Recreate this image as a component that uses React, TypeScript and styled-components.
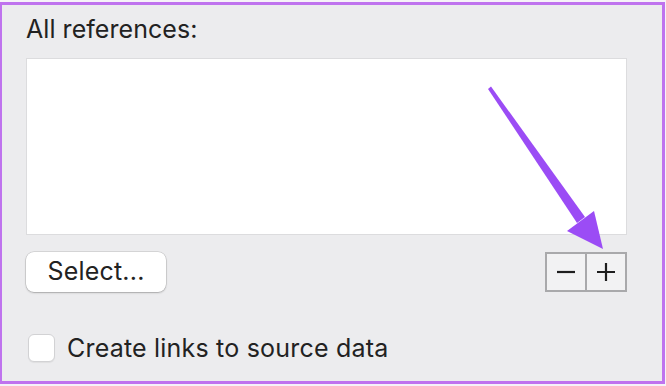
import React from 'react';
import styled, { createGlobalStyle } from 'styled-components';

const GlobalStyle = createGlobalStyle`
    html, body {
        margin: 0;
        padding: 0;
        background: #f6f3f8;
    }
    body {
        font-family: Inter, "Liberation Sans", Arial, sans-serif;
        color: #222222;
    }
`;

const Page = styled.div`
    width: 666px;
    height: 386px;
    box-sizing: border-box;
    padding: 2px 1px 2px 0;
    position: relative;
`;

const Frame = styled.div`
    height: 100%;
    box-sizing: border-box;
    border: 3px solid #bf73ee;
    border-left-width: 2px;
    background: #ececee;
    padding: 10px 35px 0 24px;
    display: flex;
    flex-direction: column;
`;

const Title = styled.div`
    font-size: 25px;
    line-height: 28px;
    letter-spacing: 0.05px;
`;

const ListBox = styled.div`
    margin-top: 15px;
    height: 175px;
    background: #ffffff;
    border: 1px solid #dcdcde;
`;

const ButtonRow = styled.div`
    display: flex;
    justify-content: space-between;
    align-items: center;
    margin-top: 17px;
`;

const PushButton = styled.button`
    width: 140px;
    height: 40px;
    box-sizing: border-box;
    border: none;
    border-radius: 8px;
    background: #ffffff;
    box-shadow: 0 0 0 0.5px rgba(0, 0, 0, 0.18), 0 1px 2px rgba(0, 0, 0, 0.22);
    font-family: inherit;
    font-size: 25px;
    letter-spacing: 0.2px;
    color: #222222;
    padding: 0 0 2px;
`;

const Segmented = styled.div`
    display: flex;
    border: 2px solid #a9a9ab;
    background: #f2f2f3;
`;

const Segment = styled.div<{ $divider?: boolean }>`
    width: 38px;
    height: 36px;
    display: flex;
    align-items: center;
    justify-content: center;
    border-left: ${(p) => (p.$divider ? '2px solid #a9a9ab' : 'none')};
`;

const CheckRow = styled.label`
    display: flex;
    align-items: center;
    gap: 12px;
    margin-top: 41px;
    font-size: 25px;
    letter-spacing: 0.2px;
`;

const CheckBox = styled.span`
    width: 27px;
    height: 28px;
    box-sizing: border-box;
    border-radius: 6px;
    background: #ffffff;
    border: 1px solid #d2d2d4;
    box-shadow: 0 1px 1px rgba(0, 0, 0, 0.06);
    margin-left: 2px;
`;

const Arrow = styled.svg`
    position: absolute;
    left: 0;
    top: 0;
    pointer-events: none;
`;

const App: React.FC = () => {
    return (
        <Page>
            <GlobalStyle />
            <Frame>
                <Title>All references:</Title>
                <ListBox />
                <ButtonRow>
                    <PushButton>Select...</PushButton>
                    <Segmented>
                        <Segment>
                            <svg width="22" height="22" viewBox="0 0 22 22">
                                <path d="M2 11h18" stroke="#1e1e1e" strokeWidth="2.2" />
                            </svg>
                        </Segment>
                        <Segment $divider>
                            <svg width="22" height="22" viewBox="0 0 22 22">
                                <path d="M2 11h18M11 2v18" stroke="#1e1e1e" strokeWidth="2.2" />
                            </svg>
                        </Segment>
                    </Segmented>
                </ButtonRow>
                <CheckRow>
                    <CheckBox />
                    Create links to source data
                </CheckRow>
            </Frame>
            <Arrow width="666" height="386" viewBox="0 0 666 386">
                <polygon points="491,86.5 488,89 577,223 585,217" fill="#9b4cf5" />
                <polygon points="567,231 594,211 603,249" fill="#9b4cf5" />
            </Arrow>
        </Page>
    );
};

export default App;
